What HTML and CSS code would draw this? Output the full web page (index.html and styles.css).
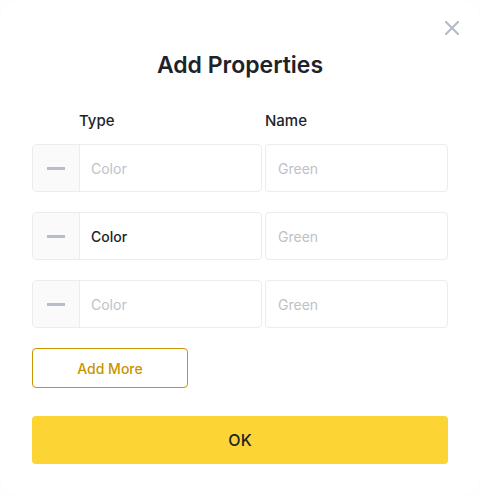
FILE: index.html
```html
<!DOCTYPE html>
<html lang="en">
<head>
<meta charset="utf-8">
<title>Add Properties</title>
<link rel="stylesheet" href="styles.css">
</head>
<body>
<div class="modal">
  <button class="close" aria-label="Close">
    <svg width="14" height="14" viewBox="0 0 14 14"><path d="M1 1L13 13M13 1L1 13" stroke="#B7BDC6" stroke-width="2.2" stroke-linecap="square"/></svg>
  </button>
  <h1 class="title">Add Properties</h1>
  <div class="grid head">
    <div class="head-type">Type</div>
    <div class="head-name">Name</div>
  </div>
  <div class="rows">
    <div class="grid row">
      <div class="group">
        <div class="minus"><span class="bar"></span></div>
        <div class="field placeholder">Color</div>
      </div>
      <div class="input placeholder">Green</div>
    </div>
    <div class="grid row">
      <div class="group">
        <div class="minus"><span class="bar"></span></div>
        <div class="field value">Color</div>
      </div>
      <div class="input placeholder">Green</div>
    </div>
    <div class="grid row">
      <div class="group">
        <div class="minus"><span class="bar"></span></div>
        <div class="field placeholder">Color</div>
      </div>
      <div class="input placeholder">Green</div>
    </div>
  </div>
  <button class="add-more">Add More</button>
  <button class="ok">OK</button>
</div>
</body>
</html>
```
FILE: styles.css
```css
* { box-sizing: border-box; }
html, body { margin: 0; padding: 0; background: #fff; }
body { font-family: Inter, "Noto Sans", sans-serif; color: #1E2329; }
.modal {
  position: relative;
  width: 480px;
  height: 496px;
  background: #fff;
  border-radius: 16px;
  box-shadow: 0 0 1px rgba(0,0,0,0.08);
  padding: 49px 32px 0 32px;
  display: flex;
  flex-direction: column;
}
.close {
  position: absolute;
  top: 21px;
  left: 445px;
  width: 14px;
  height: 14px;
  padding: 0;
  border: 0;
  background: none;
  display: flex;
}
.title {
  margin: 0;
  font-size: 23px;
  line-height: 32px;
  font-weight: 600;
  text-align: center;
  color: #1E2329;
}
.grid {
  display: grid;
  grid-template-columns: 230px 1fr;
  column-gap: 3px;
}
.head {
  margin-top: 28px;
  height: 24px;
  line-height: 24px;
  font-size: 15px;
  font-weight: 500;
  color: #1E2329;
}
.head-type { padding-left: 47px; }
.rows {
  margin-top: 11px;
  display: flex;
  flex-direction: column;
  gap: 20px;
}
.row { height: 48px; }
.group {
  display: flex;
  border: 1px solid #EAECEF;
  border-radius: 4px;
  overflow: hidden;
}
.minus {
  width: 47px;
  flex: none;
  background: #FAFAFA;
  border-right: 1px solid #EAECEF;
  display: flex;
  align-items: center;
  justify-content: center;
}
.bar {
  width: 18px;
  height: 3px;
  background: #B7BDC6;
}
.field {
  flex: 1;
  display: flex;
  align-items: center;
  padding-left: 11px;
  font-size: 14px;
}
.input {
  border: 1px solid #EAECEF;
  border-radius: 4px;
  display: flex;
  align-items: center;
  padding-left: 12px;
  font-size: 14px;
}
.placeholder { color: #BDC2CA; }
.value { color: #1E2329; font-weight: 500; }
.add-more {
  margin-top: 20px;
  width: 156px;
  height: 40px;
  border: 1px solid #C99400;
  border-radius: 4px;
  background: #fff;
  color: #C99400;
  font-family: inherit;
  font-size: 14px;
  font-weight: 500;
  padding: 0;
}
.ok {
  margin-top: 28px;
  width: 416px;
  height: 48px;
  border: 0;
  border-radius: 4px;
  background: #FCD535;
  color: #1E2329;
  font-family: inherit;
  font-size: 16px;
  font-weight: 500;
  padding: 0;
}
```
